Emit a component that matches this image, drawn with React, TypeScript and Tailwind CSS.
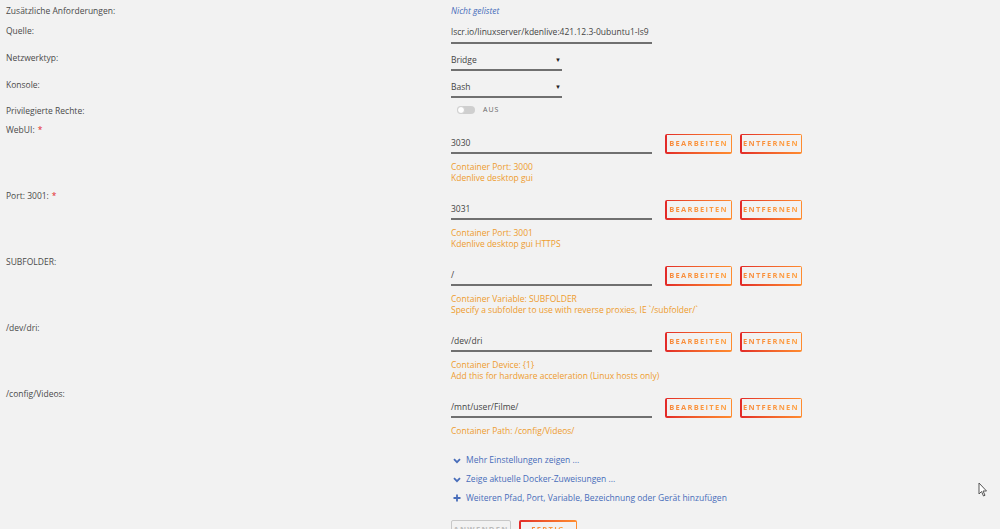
import React from 'react';

const font = { fontFamily: '"Open Sans", "Noto Sans", sans-serif' };

function GradButton({ label }: { label: string }) {
  return (
    <div className="rounded-[2px] bg-gradient-to-r from-[#e22828] to-[#ff8c2f] p-[1.5px]">
      <div className="flex h-[17px] items-center justify-center bg-[#f2f2f2] px-[4px]">
        <span className="bg-gradient-to-r from-[#f7883a] to-[#ffa040] bg-clip-text text-[7.5px] font-bold tracking-[1.3px] text-transparent">
          {label}
        </span>
      </div>
    </div>
  );
}

function Label({ text, required }: { text: string; required?: boolean }) {
  return (
    <div className="w-[451px] shrink-0 pl-[6px] pt-[3px] text-[8.5px] leading-[12px] text-[#4a4a4a]">
      {text}
      {required && <span className="ml-[3px] text-[#e22828]">*</span>}
    </div>
  );
}

function PortRow({ label, value, desc, required }: { label: string; value: string; desc: string[]; required?: boolean }) {
  return (
    <div className="flex h-[66px]">
      <Label text={label} required={required} />
      <div className="flex flex-col pt-[12px]">
        <div className="flex items-center">
          <div className="flex h-[21px] w-[201px] items-center border-b-2 border-[#707070] pt-[1px] text-[8.5px] text-[#444]">
            {value}
          </div>
          <div className="ml-[13px] flex gap-[8px]">
            <div className="w-[67px]"><GradButton label="BEARBEITEN" /></div>
            <div className="w-[62px]"><GradButton label="ENTFERNEN" /></div>
          </div>
        </div>
        <div className="mt-[7px] text-[8.5px] leading-[11px] text-[#ee9c2e]">
          {desc.map((d) => (
            <div key={d}>{d}</div>
          ))}
        </div>
      </div>
    </div>
  );
}

function Chevron() {
  return (
    <svg width="8" height="6" viewBox="0 0 8 6" className="mr-[5px]">
      <path d="M1 1.2 L4 4.2 L7 1.2" fill="none" stroke="#486dba" strokeWidth="1.8" />
    </svg>
  );
}

function Plus() {
  return (
    <svg width="8" height="8" viewBox="0 0 8 8" className="mr-[5px]">
      <path d="M4 0.5 V7.5 M0.5 4 H7.5" fill="none" stroke="#486dba" strokeWidth="1.8" />
    </svg>
  );
}

export default function App() {
  return (
    <div className="relative h-[529px] w-[1000px] overflow-hidden bg-[#f2f2f2]" style={font}>
      {/* Zusätzliche Anforderungen */}
      <div className="flex h-[22px] items-center">
        <div className="w-[451px] shrink-0 pl-[6px] text-[8.5px] text-[#4a4a4a]">Zusätzliche Anforderungen:</div>
        <div className="pt-[1px] text-[8.5px] italic text-[#486dba]">Nicht gelistet</div>
      </div>

      {/* Quelle */}
      <div className="flex h-[27px]">
        <Label text="Quelle:" />
        <div className="flex h-[22px] w-[201px] items-center overflow-hidden whitespace-nowrap border-b-2 border-[#707070] pt-[1px] text-[8.5px] text-[#444]">
          lscr.io/linuxserver/kdenlive:421.12.3-0ubuntu1-ls9
        </div>
      </div>

      {/* Netzwerktyp */}
      <div className="flex h-[27px]">
        <Label text="Netzwerktyp:" />
        <div className="flex h-[22px] w-[111px] items-center justify-between border-b-2 border-[#707070] pt-[3px] text-[8.5px] text-[#444]">
          <span>Bridge</span>
          <span className="pr-[1px] text-[6px] text-[#222]">▼</span>
        </div>
      </div>

      {/* Konsole */}
      <div className="flex h-[26px]">
        <Label text="Konsole:" />
        <div className="flex h-[22px] w-[111px] items-center justify-between border-b-2 border-[#707070] pt-[3px] text-[8.5px] text-[#444]">
          <span>Bash</span>
          <span className="pr-[1px] text-[6px] text-[#222]">▼</span>
        </div>
      </div>

      {/* Privilegierte Rechte */}
      <div className="flex h-[19px]">
        <Label text="Privilegierte Rechte:" />
        <div className="flex items-center pb-[3px] pl-[6px]">
          <div className="flex h-[8px] w-[18px] items-center rounded-full bg-[#cfcfcf]">
            <div className="h-[8px] w-[8px] rounded-full border border-[#cfcfcf] bg-white" />
          </div>
          <span className="ml-[8px] text-[7px] tracking-[1px] text-[#666]">AUS</span>
        </div>
      </div>

      <PortRow label="WebUI:" required value="3030" desc={['Container Port: 3000', 'Kdenlive desktop gui']} />
      <PortRow label="Port: 3001:" required value="3031" desc={['Container Port: 3001', 'Kdenlive desktop gui HTTPS']} />
      <PortRow
        label="SUBFOLDER:"
        value="/"
        desc={['Container Variable: SUBFOLDER', 'Specify a subfolder to use with reverse proxies, IE `/subfolder/`']}
      />
      <PortRow
        label="/dev/dri:"
        value="/dev/dri"
        desc={['Container Device: {1}', 'Add this for hardware acceleration (Linux hosts only)']}
      />
      <PortRow label="/config/Videos:" value="/mnt/user/Filme/" desc={['Container Path: /config/Videos/']} />

      {/* Links */}
      <div className="flex flex-col pl-[453px] text-[8.5px] text-[#486dba]">
        <div className="flex h-[19px] items-center"><Chevron />Mehr Einstellungen zeigen ...</div>
        <div className="flex h-[19px] items-center"><Chevron />Zeige aktuelle Docker-Zuweisungen ...</div>
        <div className="flex h-[18px] items-center"><Plus />Weiteren Pfad, Port, Variable, Bezeichnung oder Gerät hinzufügen</div>
      </div>

      {/* Bottom buttons */}
      <div className="mt-[13px] flex gap-[8px] pl-[451px]">
        <div className="flex h-[20px] w-[60px] items-center justify-center rounded-[2px] border-[1.5px] border-[#c8c8c8] text-[7.5px] font-bold tracking-[1.3px] text-[#bbb]">
          ANWENDEN
        </div>
        <div className="w-[58px]"><GradButton label="FERTIG" /></div>
      </div>

      {/* mouse cursor */}
      <svg className="absolute left-[978px] top-[482px]" width="11" height="16" viewBox="0 0 11 16">
        <path d="M1 1 L1 12 L3.5 9.5 L5.5 14 L7 13.3 L5 9 L8.5 9 Z" fill="#fff" stroke="#555" strokeWidth="1" strokeLinejoin="round" />
      </svg>
    </div>
  );
}
